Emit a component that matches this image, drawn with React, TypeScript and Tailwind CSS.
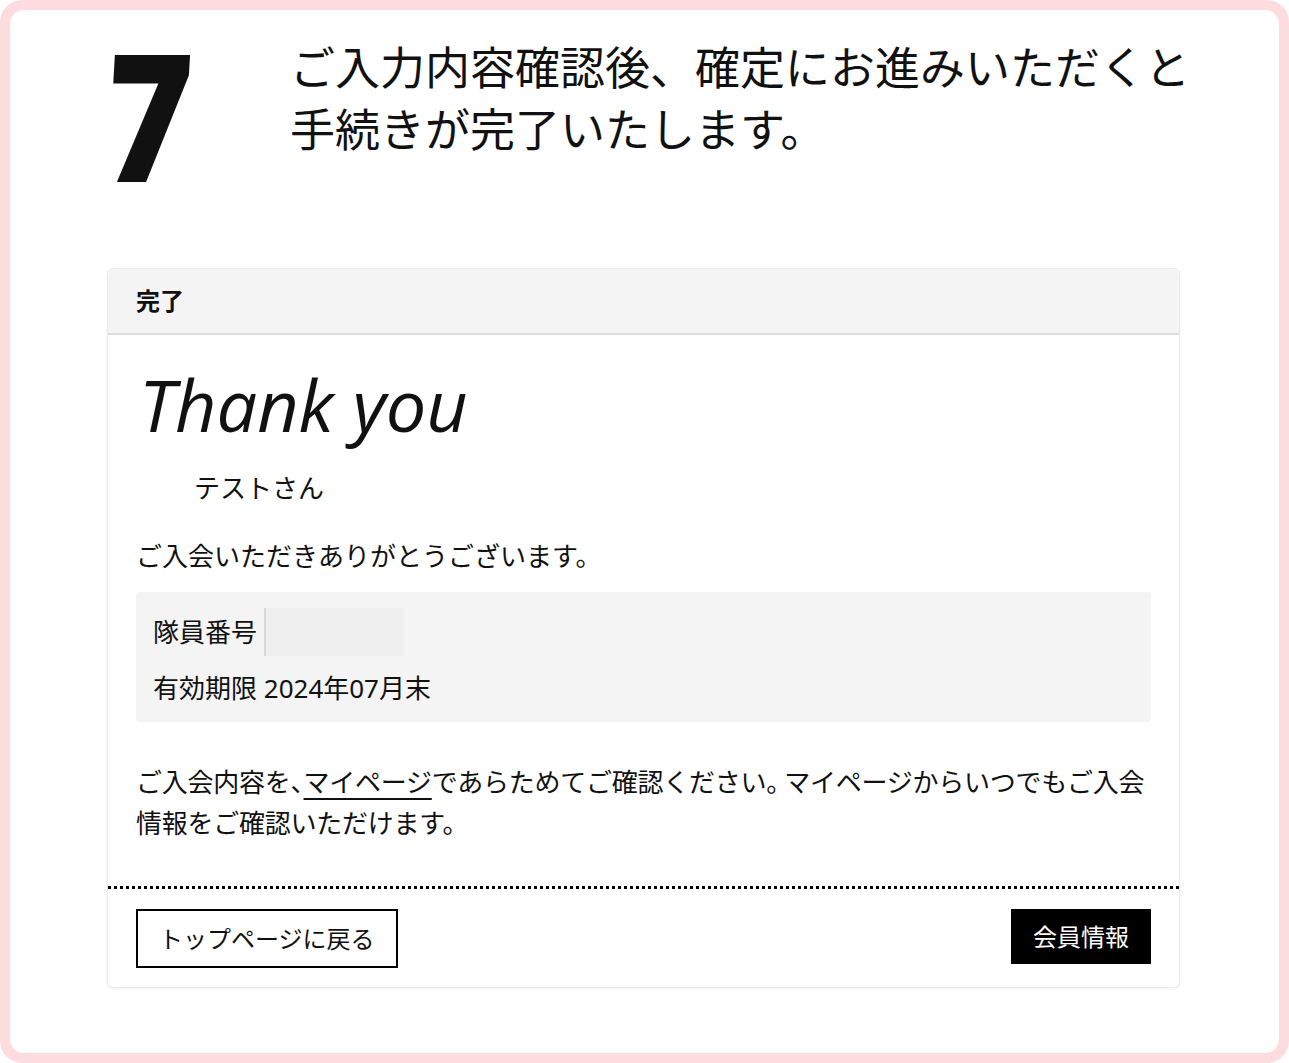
export default function App() {
  return (
    <div className="w-[1289px] h-[1063px] bg-white">
      <div className="w-full h-full rounded-[22px] bg-[#fddcdf] p-[10px]">
        <div
          className="w-full h-full rounded-[14px] bg-white text-[#111]"
          style={{ fontFamily: '"Noto Sans", "Noto Sans CJK JP", sans-serif' }}
        >
          {/* step heading */}
          <div className="flex items-start h-[258px]">
            <div className="w-[280px] pl-[96px] pt-[14px]">
              <div
                className="text-[178px] font-black leading-none -skew-x-[4deg] scale-x-[0.82] origin-left"
                style={{ fontFamily: '"Noto Sans", sans-serif' }}
              >
                7
              </div>
            </div>
            <p className="pt-[27px] text-[45px] leading-[62px]">
              ご入力内容確認後、確定にお進みいただくと
              <br />
              手続きが完了いたします。
            </p>
          </div>

          {/* card */}
          <div className="ml-[97px] mr-[99px] rounded-[6px] border border-[#ececf0] bg-white shadow-[0_1px_3px_rgba(0,0,0,0.06)]">
            <div className="h-[66px] flex items-center px-[28px] bg-[#f4f4f4] border-b-2 border-[#dcdcdc] rounded-t-[6px]">
              <span className="text-[24px] font-bold">完了</span>
            </div>

            <div className="px-[28px] pt-[33px] pb-[42px]">
              <h1
                className="text-[72px] italic leading-none pl-[3px]"
                style={{ fontFamily: '"Open Sans", "Noto Sans", sans-serif' }}
              >
                Thank you
              </h1>
              <p className="mt-[28px] pl-[58px] text-[26px] leading-[40px]">テストさん</p>
              <p className="mt-[28px] text-[26px] leading-[40px]">ご入会いただきありがとうございます。</p>

              <div className="mt-[16px] rounded-[4px] bg-[#f4f4f4] px-[17px] pt-[16px] pb-[14px]">
                <div className="flex items-center h-[48px] text-[26px]">
                  <span>隊員番号</span>
                  <span className="ml-[7px] h-[48px] w-[140px] bg-[#efefef] border-l-2 border-[#d8d8d8]" />
                </div>
                <p className="mt-[12px] text-[26px] leading-[40px]">有効期限 2024年07月末</p>
              </div>

              <p className="mt-[40px] text-[26px] leading-[41px] tracking-[-0.25px]">
                ご入会内容を<span className="tracking-[-13px]">、</span>
                <a className="underline underline-offset-[6px]">マイページ</a>
                であらためてご確認ください<span className="tracking-[-8px]">。</span>マイページからいつでもご入会情報をご確認いただけます。
              </p>
            </div>

            <div className="flex items-start justify-between border-t-[3px] border-dotted border-black px-[28px] pt-[20px] pb-[19px]">
              <button className="h-[59px] px-[21px] border-2 border-black bg-white text-[24px] text-[#111]">
                トップページに戻る
              </button>
              <button className="h-[55px] px-[22px] bg-black text-white text-[24px]">会員情報</button>
            </div>
          </div>
        </div>
      </div>
    </div>
  );
}
